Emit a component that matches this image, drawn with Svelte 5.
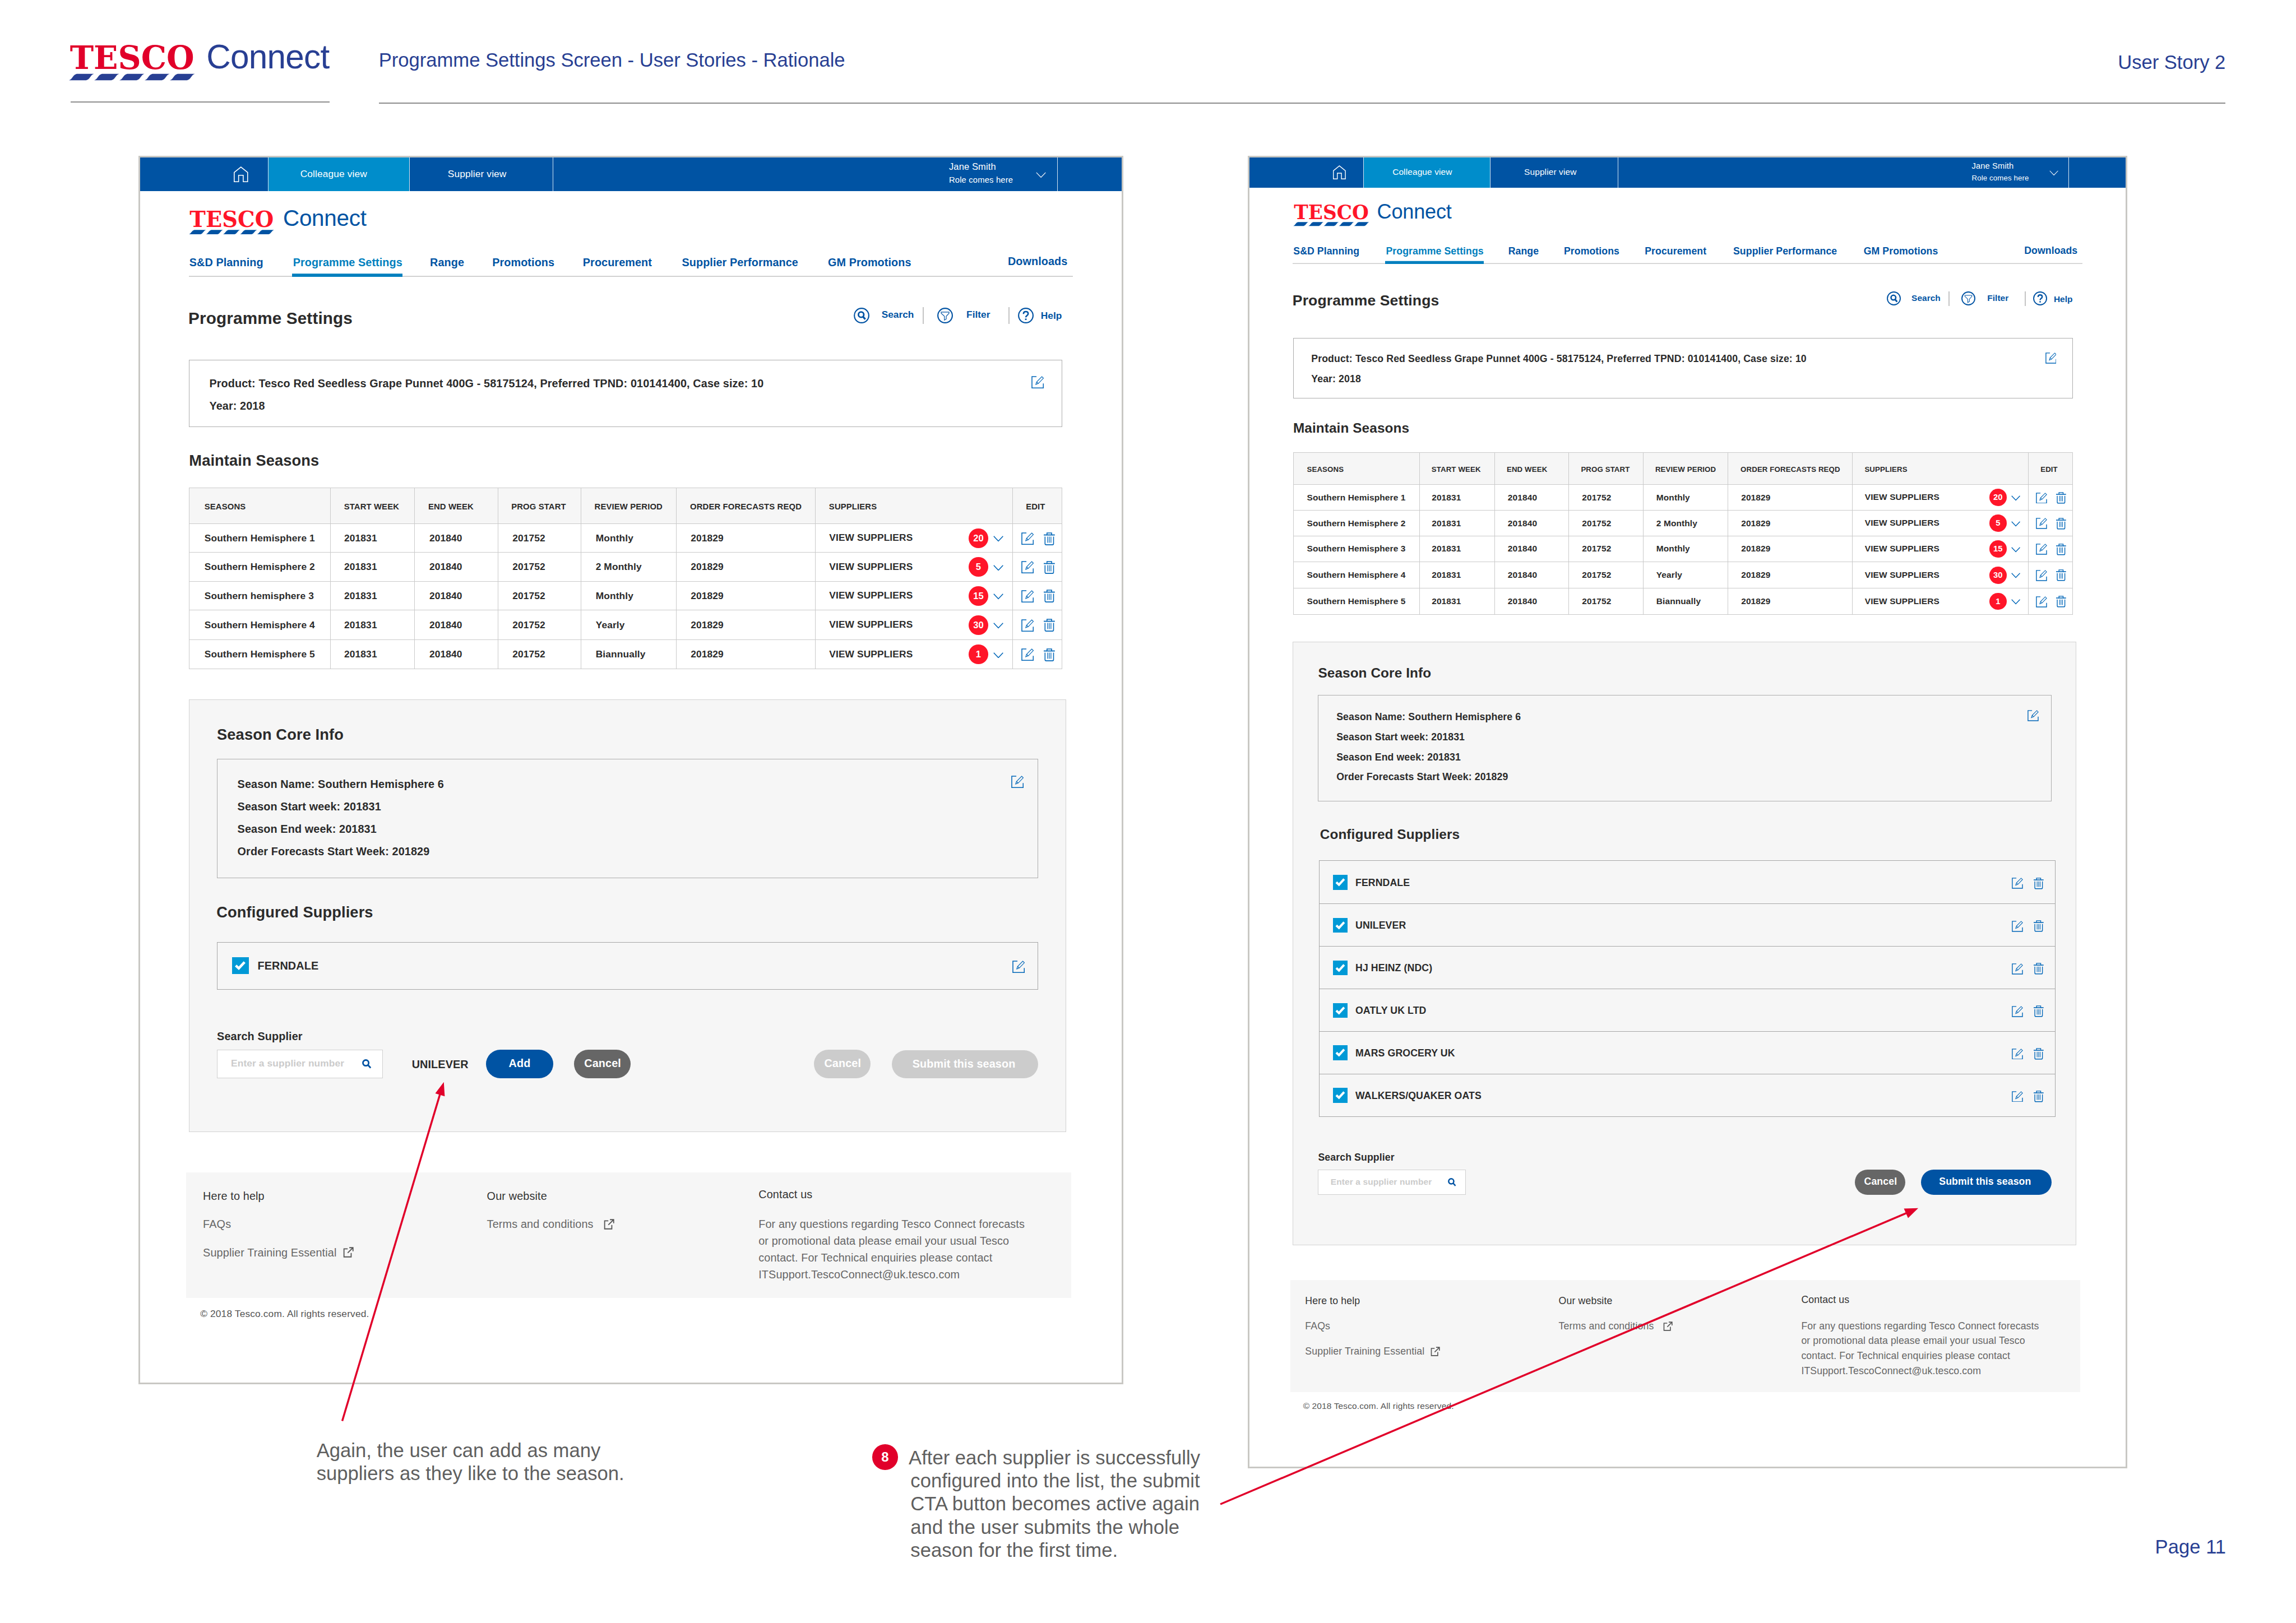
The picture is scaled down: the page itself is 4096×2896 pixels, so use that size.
<script>
    const menu = [
        "S&D Planning",
        "Programme Settings",
        "Range",
        "Promotions",
        "Procurement",
        "Supplier Performance",
        "GM Promotions",
        "Downloads",
    ];

    const columns = [
        "SEASONS",
        "START WEEK",
        "END WEEK",
        "PROG START",
        "REVIEW PERIOD",
        "ORDER FORECASTS REQD",
        "SUPPLIERS",
        "EDIT",
    ];

    const coreInfo = [
        "Season Name: Southern Hemisphere 6",
        "Season Start week: 201831",
        "Season End week: 201831",
        "Order Forecasts Start Week: 201829",
    ];

    function seasons(third) {
        return [
            { name: "Southern Hemisphere 1", review: "Monthly", count: 20 },
            { name: "Southern Hemisphere 2", review: "2 Monthly", count: 5 },
            { name: third, review: "Monthly", count: 15 },
            { name: "Southern Hemisphere 4", review: "Yearly", count: 30 },
            { name: "Southern Hemisphere 5", review: "Biannually", count: 1 },
        ];
    }

    // step 1: supplier found and about to be added, step 2: season ready to submit
    const adding = {
        seasons: seasons("Southern hemisphere 3"),
        suppliers: ["FERNDALE"],
        found: "UNILEVER",
        ready: false,
    };

    const complete = {
        seasons: seasons("Southern Hemisphere 3"),
        suppliers: [
            "FERNDALE",
            "UNILEVER",
            "HJ HEINZ (NDC)",
            "OATLY UK LTD",
            "MARS GROCERY UK",
            "WALKERS/QUAKER OATS",
        ],
        found: null,
        ready: true,
    };
</script>

{#snippet logo()}
    <svg class="logo" viewBox="0 0 272 80">
        <text x="2" y="55" textLength="269" lengthAdjust="spacingAndGlyphs">TESCO</text>
        {#each [0, 54.5, 109, 163.5, 218] as x}
            <path d="M{x} 79q4-1 8-7t9-7h37q-4 1-8 7t-9 7z" />
        {/each}
    </svg>
{/snippet}

{#snippet editIcon()}
    <svg class="edit" viewBox="0 0 27 27">
        <path d="M11 1.2H1.2v24.6h24.6V16" />
        <path d="M9.5 18.3l1.8-5.6L22.6 1.2l3.4 3.4L14.9 16.1zM11.3 12.7l3.6 3.4" stroke-width="1.4" />
    </svg>
{/snippet}

{#snippet trashIcon()}
    <svg class="trash" viewBox="0 0 24 28">
        <path d="M0 5.5h24" stroke-width="2.2" />
        <path d="M7 5V1.2h10V5M2.8 9v15.3q0 2.5 2.5 2.5h13.4q2.5 0 2.5-2.5V9" />
        <path d="M8.4 9v13.5M12 9v13.5M15.6 9v13.5" stroke-width="1.5" />
    </svg>
{/snippet}

{#snippet chevron()}
    <svg class="chevron" viewBox="0 0 22 13"><path d="M1 1l10 10.5L21 1" /></svg>
{/snippet}

{#snippet externalIcon()}
    <svg class="external" viewBox="0 0 23 23">
        <path d="M10 4H2v17.5h15.5V13M13.5 1.5h8v8M21.5 1.5L10 13" />
    </svg>
{/snippet}

{#snippet magnifier()}
    <svg class="magnifier" viewBox="0 0 20 20">
        <circle cx="8" cy="8" r="6.2" />
        <path d="M12.5 12.5l6 6.3" />
    </svg>
{/snippet}

{#snippet screen(view)}
    <div class="topbar">
        <div class="home">
            <svg viewBox="0 0 31 34"><path d="M1 33V13L15.5 1.3 30 13v20H20.5V19h-10v14z" /></svg>
        </div>
        <div class="view current">Colleague view</div>
        <div class="view">Supplier view</div>
        <div class="user">
            <div>
                <p>Jane Smith</p>
                <p class="role">Role comes here</p>
            </div>
            {@render chevron()}
        </div>
    </div>

    <div class="brand">{@render logo()}<span>Connect</span></div>

    <nav class="menu">
        {#each menu as item, i}
            <span class:active={i === 1} class:last={i === 7}>{item}</span>
        {/each}
    </nav>

    <div class="title-row">
        <h1>Programme Settings</h1>
        <div class="tools">
            <svg viewBox="0 0 34 34">
                <circle cx="17" cy="17" r="15.6" />
                <circle cx="16" cy="15" r="5.8" stroke-width="3.4" />
                <path d="M19.5 19l5.5 6" stroke-width="4" />
            </svg>
            <span class="search">Search</span>
            <i></i>
            <svg class="filter" viewBox="0 0 34 34">
                <circle cx="17" cy="17" r="15.6" />
                <path d="M8.5 9.5h17v2.5l-6 6.5v6l-4 2.5v-8.5l-7-6.5z" stroke-width="1.4" />
            </svg>
            <span class="filter-label">Filter</span>
            <i></i>
            <svg class="help" viewBox="0 0 34 34">
                <circle cx="17" cy="17" r="15.6" />
                <path d="M12 13.5q0-5 5-5t5 4.5q0 2.5-2.5 4T17 21" stroke-width="3.2" />
                <path d="M17 23.5v3.2" stroke-width="3.4" />
            </svg>
            <span class="help-label">Help</span>
        </div>
    </div>

    <div class="box product">
        <div>
            <p>Product: Tesco Red Seedless Grape Punnet 400G - 58175124, Preferred TPND: 010141400, Case size: 10</p>
            <p>Year: 2018</p>
        </div>
        {@render editIcon()}
    </div>

    <h2 class="maintain">Maintain Seasons</h2>

    <div class="table">
        <div class="row head">
            {#each columns as column}
                <div>{column}</div>
            {/each}
        </div>
        {#each view.seasons as season}
            <div class="row">
                <div>{season.name}</div>
                <div>201831</div>
                <div>201840</div>
                <div>201752</div>
                <div>{season.review}</div>
                <div>201829</div>
                <div>VIEW SUPPLIERS <b class="count">{season.count}</b>{@render chevron()}</div>
                <div>{@render editIcon()}{@render trashIcon()}</div>
            </div>
        {/each}
    </div>

    <section class="panel" class:ready={view.ready}>
        <h2>Season Core Info</h2>
        <div class="box core">
            <div>
                {#each coreInfo as line}
                    <p>{line}</p>
                {/each}
            </div>
            {@render editIcon()}
        </div>

        <h2 class="configured">Configured Suppliers</h2>
        <div class="suppliers">
            {#each view.suppliers as supplier}
                <div class="supplier">
                    <svg class="check" viewBox="0 0 36 36"><path d="M8 18l6.5 6L27 10.5" /></svg>
                    <span>{supplier}</span>
                    {@render editIcon()}
                    {#if view.ready}{@render trashIcon()}{/if}
                </div>
            {/each}
        </div>

        <p class="search-title">Search Supplier</p>
        <div class="actions">
            <div class="input"><span>Enter a supplier number</span>{@render magnifier()}</div>
            {#if view.found}
                <span class="found">{view.found}</span>
                <div class="button add">Add</div>
                <div class="button cancel">Cancel</div>
            {/if}
            <div class="button cancel push" class:disabled={!view.ready}>Cancel</div>
            <div class="button submit" class:disabled={!view.ready}>Submit this season</div>
        </div>
    </section>

    <footer>
        <div>
            <h3>Here to help</h3>
            <p>FAQs</p>
            <p>Supplier Training Essential {@render externalIcon()}</p>
        </div>
        <div class="website">
            <h3>Our website</h3>
            <p>Terms and conditions {@render externalIcon()}</p>
        </div>
        <div class="contact">
            <h3>Contact us</h3>
            <p>
                For any questions regarding Tesco Connect forecasts<br />
                or promotional data please email your usual Tesco<br />
                contact. For Technical enquiries please contact<br />
                ITSupport.TescoConnect@uk.tesco.com
            </p>
        </div>
    </footer>
    <p class="copyright">© 2018 Tesco.com. All rights reserved.</p>
{/snippet}

<main class="sheet">
    <header>
        <div class="sheet-brand">{@render logo()}<span>Connect</span></div>
        <div class="sheet-title">
            <span>Programme Settings Screen - User Stories - Rationale</span>
            <span class="story">User Story 2</span>
        </div>
    </header>

    <div class="boards">
        <div class="left">
            <div class="frame"><div class="screen">{@render screen(adding)}</div></div>
            <div class="notes">
                <p class="note">
                    Again, the user can add as many<br />
                    suppliers as they like to the season.
                </p>
                <b class="step">8</b>
                <p class="note after">
                    After each supplier is successfully<br />
                    configured into the list, the submit<br />
                    CTA button becomes active again<br />
                    and the user submits the whole<br />
                    season for the first time.
                </p>
            </div>
        </div>
        <div class="right">
            <div class="frame small"><div class="screen">{@render screen(complete)}</div></div>
            <p class="page-number">Page 11</p>
        </div>
    </div>

    <svg class="arrows" viewBox="0 0 4961 3508">
        <path class="line" d="M739.5 3071L951 2364M2637 3251L4120 2621.5" />
        <path d="M959 2338.5L940.5 2363l20.5 6.5zM4145 2611l-31 1 9 20.5z" />
    </svg>
</main>

<style>
    :global(body) {
        margin: 0;
        overflow: hidden;
        background: #fff;
    }

    .sheet,
    .sheet * {
        box-sizing: border-box;
    }

    .sheet {
        position: relative;
        width: 4961px;
        height: 3508px;
        zoom: 0.8256;
        background: #fff;
        font-family: "Liberation Sans", Arial, sans-serif;
        color: #2b2b2b;
    }

    p,
    h1,
    h2,
    h3 {
        margin: 0;
    }

    svg {
        display: block;
        flex: none;
        fill: none;
        stroke: #0066b8;
        stroke-width: 1.9;
    }

    /* sheet header */
    header {
        display: flex;
        height: 337px;
        padding: 90px 152px 0 149px;
        color: #283f93;
    }

    .sheet-brand {
        display: flex;
        width: 564px;
        height: 132px;
        margin-right: 105.5px;
        padding-top: 5px;
        background: linear-gradient(#8c8c8c, #8c8c8c) 4px 100% / 560px 2.4px no-repeat;
    }

    .sheet-brand span {
        margin-left: 25px;
        font-size: 73px;
        line-height: 56px;
        letter-spacing: -0.9px;
    }

    .sheet-title {
        display: flex;
        flex: 1;
        justify-content: space-between;
        height: 134px;
        border-bottom: 2.5px solid #8c8c8c;
        font-size: 42px;
        line-height: 80px;
        letter-spacing: -0.05px;
    }

    .story {
        padding-top: 4px;
    }

    .logo {
        width: 272px;
        height: 80px;
        overflow: visible;
    }

    .logo text {
        fill: #e1002a;
        stroke: none;
        font: bold 70px "DejaVu Serif", serif;
    }

    .logo path {
        fill: #283f93;
        stroke: none;
    }

    /* the two boards and their notes */
    .boards {
        display: flex;
        padding-left: 299px;
    }

    .left {
        width: 2397px;
    }

    .frame {
        width: 2128px;
        height: 2655px;
        border: 4.5px solid #c9c8c4;
        overflow: hidden;
    }

    .frame.small {
        width: 1901px;
        height: 2837px;
    }

    .screen {
        width: 2121px;
        letter-spacing: 0.15px;
    }

    .small .screen {
        zoom: 0.893;
    }

    .notes {
        display: flex;
        padding: 118px 0 0 385px;
    }

    .note {
        width: 1201px;
        font-size: 42px;
        line-height: 50px;
        color: #5f5f5f;
        white-space: nowrap;
    }

    .step {
        width: 55px;
        height: 55px;
        margin-top: 12px;
        border-radius: 50%;
        background: #e1002a;
        color: #fff;
        font-size: 29px;
        line-height: 55px;
        text-align: center;
    }

    .note.after {
        width: 660px;
        margin-top: 16px;
        padding-left: 27.5px;
        text-indent: -4px;
    }

    .page-number {
        width: 2114px;
        padding-top: 142px;
        color: #283f93;
        font-size: 42px;
        line-height: 54px;
        text-align: right;
    }

    .arrows {
        position: absolute;
        inset: 0;
        width: 4961px;
        height: 3508px;
    }

    .arrows path {
        fill: #e1002a;
        stroke: none;
    }

    .arrows .line {
        fill: none;
        stroke: #e1002a;
        stroke-width: 4.2;
    }

    /* screen top bar */
    .topbar {
        display: flex;
        height: 73px;
        background: #0053a3;
        color: #fff;
    }

    .topbar svg {
        stroke: #fff;
    }

    .home {
        width: 276px;
        padding: 19px 0 0 203px;
    }

    .home svg {
        width: 31px;
        height: 34px;
    }

    .view {
        width: 310px;
        padding-left: 82px;
        border-right: 2px solid #d5e4f2;
        font-size: 21px;
        line-height: 71px;
    }

    .view.current {
        width: 307px;
        padding-left: 69px;
        border-left: 2px solid #d5e4f2;
        background: #008dcb;
    }

    .user {
        display: flex;
        justify-content: space-between;
        width: 1090px;
        padding: 6px 24px 0 855px;
        border-right: 2px solid #d5e4f2;
        font-size: 20px;
        line-height: 29px;
    }

    .role {
        font-size: 18px;
        white-space: nowrap;
    }

    .user .chevron {
        margin-top: 25px;
        stroke-width: 1.4;
    }

    .chevron {
        width: 22px;
        height: 13px;
    }

    .brand {
        display: flex;
        height: 55px;
        margin: 39px 0 0 106px;
        color: #0053a3;
    }

    .brand .logo {
        width: 184px;
        height: 54px;
    }

    .brand .logo text {
        fill: #ff1529;
    }

    .brand .logo path {
        fill: #0053a3;
    }

    .brand span {
        margin-left: 19px;
        font-size: 49px;
        line-height: 37px;
        letter-spacing: -0.3px;
    }

    .menu {
        display: grid;
        grid-template-columns: 224px 296px 134.7px 195.7px 214px 315.6px 388.7px auto;
        width: 1911px;
        height: 60px;
        margin: 31px 0 0 105px;
        box-shadow: inset 0 -2px #ccc;
        color: #0053a3;
        font-size: 24px;
        font-weight: bold;
        line-height: 24px;
        letter-spacing: 0.1px;
        white-space: nowrap;
    }

    .menu span {
        padding: 17.5px 0 0 1.5px;
    }

    .menu .active {
        justify-self: start;
        width: 238px;
        box-shadow: inset 0 -7px #007fbe;
        color: #007fbe;
    }

    .menu .last {
        padding-top: 15.5px;
    }

    .title-row {
        display: flex;
        justify-content: space-between;
        width: 1886px;
        height: 60px;
        margin: 55px 0 0 106px;
    }

    h1 {
        margin-left: -1.5px;
        font-size: 36px;
        line-height: 67px;
        letter-spacing: 0.15px;
    }

    h2 {
        height: 40px;
        font-size: 33px;
        line-height: 42.5px;
    }

    .tools {
        display: flex;
        height: 57px;
        align-items: center;
        color: #0053a3;
        font-size: 21px;
        font-weight: bold;
        line-height: 24px;
        letter-spacing: 0;
    }

    .tools svg {
        width: 34px;
        height: 34px;
        stroke: #0053a3;
        stroke-width: 2.6;
    }

    .tools i {
        width: 2.5px;
        height: 36px;
        background: #c4c4c4;
    }

    .search {
        margin: 0 19px 2px 26px;
    }

    .tools .filter {
        margin-left: 29px;
    }

    .filter-label {
        margin: 0 39px 2px 29px;
    }

    .tools .help {
        margin-left: 18px;
    }

    .help-label {
        margin: 2px 0 0 16px;
    }

    .box {
        display: flex;
        justify-content: space-between;
        border: 2px solid #adadad;
        font-size: 24px;
        font-weight: bold;
        line-height: 48.6px;
    }

    .edit {
        width: 27px;
        height: 27px;
    }

    .trash {
        width: 24px;
        height: 28px;
    }

    .product {
        width: 1887px;
        height: 146px;
        margin: 64px 0 0 106px;
        padding: 25.5px 39px 0 42.5px;
    }

    .product .edit {
        margin-top: 8px;
    }

    .maintain {
        margin: 50px 0 40px 106px;
    }

    /* seasons table */
    .table {
        width: 1887px;
        margin-left: 106px;
        border: solid #cacaca;
        border-width: 2px 0 0 2px;
    }

    .row {
        display: grid;
        grid-template-columns: 305px 182px 179.6px 179.8px 205.4px 301.2px 425.6px 1fr;
        height: 62.3px;
        border-bottom: 2px solid #cacaca;
        font-size: 21px;
        font-weight: bold;
    }

    .row:nth-child(n + 5) {
        height: 63.7px;
    }

    .row > div {
        display: flex;
        align-items: center;
        padding: 0.5px 0 0 31px;
        border-right: 2px solid #cacaca;
        white-space: nowrap;
    }

    .row > div:first-child {
        padding-left: 32px;
    }

    .row > div:nth-child(2) {
        padding-left: 29px;
    }

    .row.head {
        height: 77.5px;
        background: #f6f6f6;
        font-size: 18px;
    }

    .row.head > div {
        padding: 4.5px 0 0 28.5px;
    }

    .row.head > div:first-child {
        padding-left: 32px;
    }

    .row.head > div:nth-child(6) {
        padding-left: 29.5px;
    }

    .row:not(.head) > div:nth-child(7) {
        padding: 0 19px 0 29px;
    }

    .row:not(.head) > div:nth-child(8) {
        padding: 3px 15px 0 18px;
        justify-content: space-between;
    }

    .count {
        width: 42px;
        height: 42px;
        margin: 1px 11px 0 auto;
        border-radius: 50%;
        background: #ff1529;
        color: #fff;
        font-size: 20px;
        line-height: 43px;
        text-align: center;
    }

    .row .chevron {
        margin-top: 4px;
    }

    /* season being configured */
    .panel {
        width: 1896px;
        height: 935px;
        margin: 65.5px 0 0 105px;
        padding: 53px 0 0 60px;
        border: 2px solid #d2d2d2;
        background: #f6f6f6;
    }

    .panel.ready {
        height: 1461px;
    }

    .core {
        width: 1774.5px;
        height: 257.5px;
        margin-top: 34.5px;
        padding: 28.5px 30px 0 43px;
    }

    .core .edit {
        margin-top: 6.5px;
    }

    .configured {
        margin: 52.5px 0 45px -1px;
    }

    .ready .configured {
        margin: 58.5px 0 45px 4.5px;
    }

    .suppliers {
        width: 1774.5px;
        border: 2px solid #a6a6a6;
    }

    .ready .suppliers {
        width: 1782px;
        margin-left: 2.5px;
    }

    .supplier {
        display: flex;
        align-items: center;
        height: 101px;
        padding: 0 28px 0 32px;
        font-size: 24px;
        font-weight: bold;
    }

    .ready .supplier {
        height: 103px;
        padding-right: 27px;
    }

    .supplier + .supplier {
        border-top: 2px solid #a6a6a6;
    }

    .check {
        width: 36px;
        height: 36px;
        background: #0099d6;
        stroke: #fff;
        stroke-width: 5.5;
    }

    .supplier span {
        margin: 1.5px 0 0 18.5px;
    }

    .supplier .edit {
        margin: 5px 0 0 auto;
    }

    .supplier .trash {
        margin: 5px 0 0 27px;
    }

    .search-title {
        margin: 90px 0 16px;
        font-size: 24px;
        font-weight: bold;
        line-height: 24px;
    }

    .ready .search-title {
        margin-top: 87px;
    }

    .actions {
        display: flex;
        width: 1774.5px;
        height: 61px;
        align-items: center;
        font-size: 24px;
        font-weight: bold;
    }

    .input {
        display: flex;
        justify-content: space-between;
        align-items: center;
        width: 358px;
        height: 61px;
        padding: 0 23px 0 29px;
        border: 2px solid #d0d0d0;
        background: #fff;
        color: #cbcbcb;
        font-size: 21px;
    }

    .input span {
        margin-bottom: 1.5px;
    }

    .magnifier {
        width: 20px;
        height: 20px;
        stroke: #0053a3;
        stroke-width: 3.4;
    }

    .found {
        width: 125px;
        margin: 2px 35px 0 63px;
    }

    .button {
        height: 61px;
        border-radius: 31px;
        background: #0053a3;
        color: #fff;
        line-height: 59.5px;
        text-align: center;
    }

    .add {
        width: 146px;
    }

    .cancel {
        width: 123px;
        margin-left: 44px;
        padding-left: 2px;
        background: #666;
    }

    .push {
        margin-left: auto;
    }

    .submit {
        width: 316px;
        margin: 2px 0 0 46px;
        padding-right: 5px;
    }

    .ready .submit {
        margin-left: 37px;
    }

    .disabled {
        background: #ccc;
    }

    /* screen footer */
    footer {
        display: flex;
        width: 1912px;
        height: 271.5px;
        margin: 87px 0 0 100px;
        padding: 20.5px 0 0 36px;
        background: #f6f6f6;
        color: #666;
        font-size: 24px;
        line-height: 61px;
        letter-spacing: 0.18px;
    }

    .ready + footer {
        margin: 84px 0 0 99px;
    }

    h3 {
        font-size: 24px;
        font-weight: normal;
        color: #333;
    }

    footer > div {
        width: 613.5px;
    }

    footer p {
        display: flex;
        align-items: center;
    }

    .external {
        width: 23px;
        height: 23px;
        margin-left: 14px;
        stroke: #555;
        stroke-width: 2.2;
    }

    .website .external {
        margin-left: 22px;
    }

    footer > .website {
        width: 587px;
    }

    .contact h3 {
        margin-top: -3px;
        line-height: 61px;
    }

    .contact p {
        display: block;
        margin-top: 14.5px;
        line-height: 36.4px;
        letter-spacing: 0.15px;
    }

    .copyright {
        margin: 13px 0 0 130px;
        color: #555;
        font-size: 21px;
        line-height: 42px;
        letter-spacing: 0.18px;
    }
</style>
